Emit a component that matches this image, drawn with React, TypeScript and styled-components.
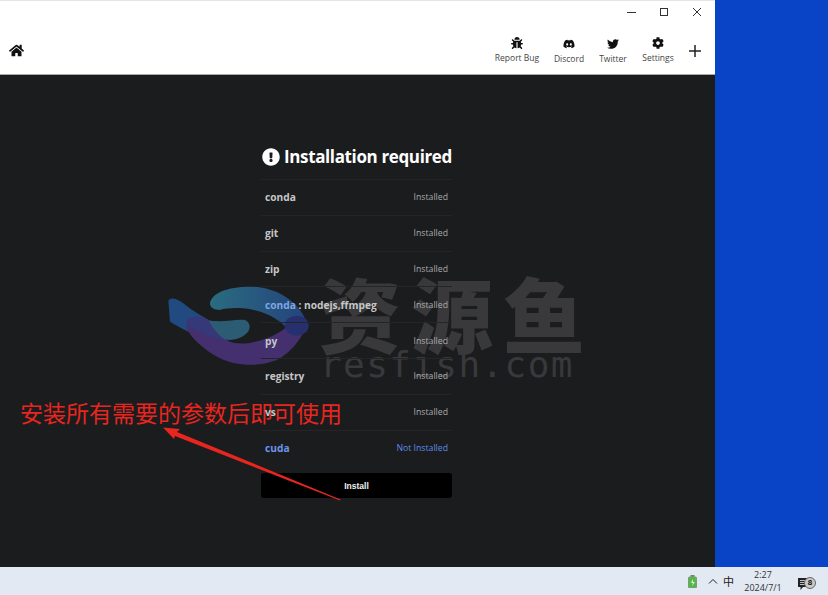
import React from "react";
import styled, { createGlobalStyle } from "styled-components";
import { FaBug, FaDiscord, FaTwitter, FaCog, FaHome, FaExclamationCircle } from "react-icons/fa";

const Global = createGlobalStyle`
  html, body { margin: 0; padding: 0; width: 828px; height: 595px; overflow: hidden; }
  body { font-family: "Noto Sans", "Open Sans", sans-serif; background: #0b45c2; }
`;

const Screen = styled.div`
  position: relative;
  width: 828px;
  height: 595px;
  display: flex;
  flex-direction: column;
  overflow: hidden;
`;
const Desktop = styled.div`
  flex: 1;
  display: flex;
  min-height: 0;
  background: #0a44c6;
`;
const AppWindow = styled.div`
  width: 715px;
  display: flex;
  flex-direction: column;
  background: #1b1c1e;
`;
const Chrome = styled.header`
  height: 75px;
  box-sizing: border-box;
  background: #fff;
  border-top: 1px solid #e6e6e6;
  border-bottom: 1px solid #a9a9a9;
  display: flex;
  flex-direction: column;
`;
const TitleBar = styled.div`
  height: 22px;
  display: flex;
  justify-content: flex-end;
  align-items: center;
  padding-right: 2px;
`;
const WinButton = styled.div`
  width: 32.5px;
  height: 22px;
  display: flex;
  align-items: center;
  justify-content: center;
  svg { display: block; }
`;
const NavBar = styled.nav`
  flex: 1;
  display: flex;
  align-items: center;
  justify-content: space-between;
  padding: 4px 14px 0 9px;
`;
const HomeLink = styled.div`
  font-size: 15px;
  line-height: 0;
  color: #111;
`;
const NavItems = styled.div`
  display: flex;
  align-items: center;
`;
const NavItem = styled.div<{ $width: number; $shift?: number }>`
  width: ${(p) => p.$width}px;
  display: flex;
  flex-direction: column;
  align-items: center;
  color: #1a1a1a;
  margin-top: ${(p) => p.$shift ?? 0}px;
  svg { font-size: 12px; display: block; color: #111; }
`;
const NavLabel = styled.span`
  margin-top: 3px;
  font-family: "Open Sans", sans-serif;
  font-size: 8.5px;
  line-height: 12px;
  color: #444;
  white-space: nowrap;
`;
const PlusLink = styled.div`
  margin-left: 9px;
  line-height: 0;
  svg { display: block; }
`;
const Content = styled.main`
  flex: 1;
  display: flex;
  flex-direction: column;
  align-items: center;
  padding-top: 65px;
`;
const Panel = styled.section`
  position: relative;
  z-index: 1;
  width: 191px;
  margin-right: 2px;
  display: flex;
  flex-direction: column;
`;
const Title = styled.h1`
  margin: 0;
  height: 39px;
  box-sizing: border-box;
  padding-bottom: 5px;
  display: flex;
  align-items: center;
  gap: 4px;
  font-family: "Open Sans", sans-serif;
  font-size: 17px;
  line-height: 24px;
  font-weight: 700;
  color: #fff;
  letter-spacing: -0.37px;
  white-space: nowrap;
  svg { font-size: 18px; flex: none; margin-left: 1px; }
`;
const Row = styled.div`
  height: 35.8px;
  box-sizing: border-box;
  border-top: 1px solid #242527;
  display: flex;
  align-items: center;
  justify-content: space-between;
  padding: 0 4px;
`;
const Name = styled.span<{ $missing?: boolean }>`
  font-family: "Open Sans", sans-serif;
  font-size: 10.2px;
  font-weight: 700;
  color: ${(p) => (p.$missing ? "#6b95ea" : "#c6c6c6")};
  white-space: nowrap;
`;
const Accent = styled.span`
  color: #7ea8e0;
`;
const Status = styled.span<{ $missing?: boolean }>`
  font-family: "Open Sans", sans-serif;
  font-size: 8.7px;
  color: ${(p) => (p.$missing ? "#5f8be6" : "#a9a9a9")};
  white-space: nowrap;
`;
const InstallButton = styled.button`
  margin-top: 8px;
  height: 25px;
  border: 0;
  border-radius: 3px;
  background: #000;
  color: #f2f2f2;
  font-family: "Liberation Sans", sans-serif;
  font-size: 8.5px;
  font-weight: 700;
  padding: 0;
`;
const Taskbar = styled.footer`
  height: 28px;
  background: #e2e9f2;
  display: flex;
  align-items: center;
  justify-content: flex-end;
  padding-right: 14px;
  color: #222;
`;
const Tray = styled.div`
  display: flex;
  align-items: center;
`;
const TrayGlyph = styled.span`
  font-family: "Noto Sans CJK SC", sans-serif;
  font-size: 11px;
  margin: 0 0 0 5px;
  line-height: 1;
`;
const Clock = styled.div`
  width: 52px;
  margin-left: 3px;
  text-align: center;
  font-family: "Open Sans", sans-serif;
  font-size: 9px;
  line-height: 13px;
  color: #333;
`;
const NoticeIcon = styled.div`
  position: relative;
  width: 16px;
  height: 16px;
  margin-left: 9px;
`;
const NoticeBadge = styled.span`
  position: absolute;
  left: 6px;
  top: 4px;
  width: 12px;
  height: 12px;
  border-radius: 50%;
  background: #c9c9c9;
  border: 1px solid #666;
  box-sizing: border-box;
  font-family: "Liberation Sans", sans-serif;
  font-size: 8px;
  font-weight: 700;
  line-height: 10px;
  text-align: center;
  color: #111;
`;
const LogoMark = styled.svg`
  position: absolute;
  left: 150px;
  top: 265px;
  pointer-events: none;
`;
const WatermarkCn = styled.div`
  position: absolute;
  left: 319px;
  top: 262px;
  font-family: "Noto Sans CJK SC", sans-serif;
  font-size: 82px;
  line-height: 100px;
  font-weight: 900;
  letter-spacing: 10px;
  color: #39393b;
  white-space: nowrap;
  pointer-events: none;
`;
const WatermarkEn = styled.div`
  position: absolute;
  left: 320px;
  top: 345px;
  font-family: "DejaVu Sans Mono", monospace;
  font-size: 36px;
  line-height: 40px;
  letter-spacing: 1.4px;
  color: #39393b;
  white-space: nowrap;
  pointer-events: none;
`;
const Annotation = styled.div`
  position: absolute;
  left: 20px;
  top: 395px;
  font-family: "Noto Sans CJK SC", sans-serif;
  font-size: 23px;
  line-height: 34px;
  color: #e8261f;
  white-space: nowrap;
`;
const ArrowMark = styled.svg`
  position: absolute;
  z-index: 2;
  left: 155px;
  top: 420px;
  pointer-events: none;
`;

const rows: { name: React.ReactNode; missing?: boolean }[] = [
  { name: "conda" },
  { name: "git" },
  { name: "zip" },
  { name: <><Accent>conda</Accent> : nodejs,ffmpeg</> },
  { name: "py" },
  { name: "registry" },
  { name: "vs" },
  { name: "cuda", missing: true },
];

export default function App() {
  return (
    <Screen>
      <Global />
      <Desktop>
        <AppWindow>
          <Chrome>
            <TitleBar>
              <WinButton>
                <svg width="10" height="10" viewBox="0 0 10 10"><path d="M0 5.5h9" stroke="#333" /></svg>
              </WinButton>
              <WinButton>
                <svg width="10" height="10" viewBox="0 0 10 10"><rect x="1.5" y="1.5" width="7" height="7" fill="none" stroke="#333" /></svg>
              </WinButton>
              <WinButton>
                <svg width="10" height="10" viewBox="0 0 10 10"><path d="M1 1l8 8M9 1l-8 8" stroke="#333" /></svg>
              </WinButton>
            </TitleBar>
            <NavBar>
              <HomeLink><FaHome /></HomeLink>
              <NavItems>
                <NavItem $width={62}><FaBug /><NavLabel>Report Bug</NavLabel></NavItem>
                <NavItem $width={42} $shift={1}><FaDiscord /><NavLabel>Discord</NavLabel></NavItem>
                <NavItem $width={46} $shift={1}><FaTwitter /><NavLabel>Twitter</NavLabel></NavItem>
                <NavItem $width={44}><FaCog /><NavLabel>Settings</NavLabel></NavItem>
                <PlusLink>
                  <svg width="12" height="12" viewBox="0 0 12 12"><path d="M6 0v12M0 6h12" stroke="#222" strokeWidth="1.5" /></svg>
                </PlusLink>
              </NavItems>
            </NavBar>
          </Chrome>
          <Content>
            <Panel>
              <Title><FaExclamationCircle />Installation required</Title>
              {rows.map((r, i) => (
                <Row key={i}>
                  <Name $missing={r.missing}>{r.name}</Name>
                  <Status $missing={r.missing}>{r.missing ? "Not Installed" : "Installed"}</Status>
                </Row>
              ))}
              <InstallButton>Install</InstallButton>
            </Panel>
          </Content>
        </AppWindow>
      </Desktop>
      <Taskbar>
        <Tray>
          <svg width="9" height="13" viewBox="0 0 9 13">
            <rect x="2.5" y="0" width="4" height="2" fill="#6a8a6a" />
            <rect x="0.5" y="2" width="8" height="11" rx="1" fill="#55b84a" stroke="#7a9a7a" />
            <path d="M5 4L3 8h2l-1 3 3-4H5z" fill="#d8f2c8" />
          </svg>
          <svg width="10" height="6" viewBox="0 0 10 6" style={{ marginLeft: 11 }}>
            <path d="M1 5.5l4-4 4 4" fill="none" stroke="#222" />
          </svg>
          <TrayGlyph>中</TrayGlyph>
          <Clock>2:27<br />2024/7/1</Clock>
          <NoticeIcon>
            <svg width="13" height="12" viewBox="0 0 13 12">
              <path d="M0 0h13v9H5L2.5 12V9H0z" fill="#222" />
              <path d="M2 2.5h9M2 4.5h9M2 6.5h6" stroke="#e2e9f2" strokeWidth="0.8" />
            </svg>
            <NoticeBadge>8</NoticeBadge>
          </NoticeIcon>
        </Tray>
      </Taskbar>
      <LogoMark width="240" height="120" viewBox="0 0 720 360">
        <defs>
          <linearGradient id="arcFill" x1="0" y1="0" x2="1" y2="0">
            <stop offset="0" stopColor="#2a6c80" />
            <stop offset="1" stopColor="#24437c" />
          </linearGradient>
        </defs>
        <path d="M55 108C60 95 80 100 100 115C130 140 160 155 175 165C195 195 215 215 235 228L180 235C150 215 100 195 60 170Z" fill="#214a80" />
        <path d="M180 115C185 85 230 65 300 65C370 65 440 100 470 170L420 205C400 165 340 135 280 130C250 128 225 130 210 135C195 135 180 130 180 115Z" fill="url(#arcFill)" />
        <path d="M170 165C220 175 260 160 285 165C300 172 305 190 290 205C270 225 235 230 215 220C195 210 180 185 170 165Z" fill="#2c5b74" />
        <path d="M110 165C130 150 160 155 175 165C190 195 215 225 245 232C290 245 370 220 405 190L470 170C470 200 430 260 380 285C330 305 260 305 210 280C160 255 120 215 110 190Z" fill="#45306f" />
        <path d="M110 165C130 150 160 155 175 165C185 190 200 210 225 225C180 220 135 195 110 178Z" fill="#35397a" />
        <ellipse cx="440" cy="182" rx="36" ry="30" fill="#27306f" />
      </LogoMark>
      <WatermarkCn>资源鱼</WatermarkCn>
      <WatermarkEn>resfish.com</WatermarkEn>
      <Annotation>安装所有需要的参数后即可使用</Annotation>
      <ArrowMark width="195" height="90" viewBox="0 0 195 90">
        <path d="M8 7.5L25 9L22 12L185.5 79.5L185 80.5L20 16L19 19Z" fill="#e8261f" />
      </ArrowMark>
    </Screen>
  );
}
